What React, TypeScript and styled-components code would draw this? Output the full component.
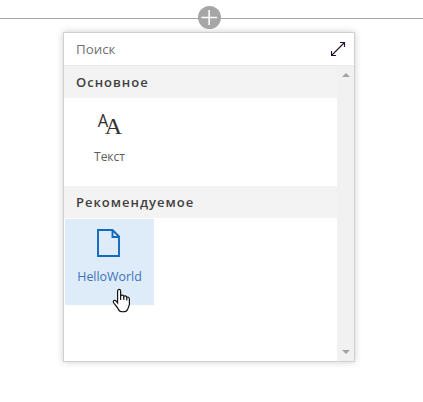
import React from 'react';
import styled, { createGlobalStyle } from 'styled-components';

const Global = createGlobalStyle`
  * { box-sizing: border-box; }
  body { margin: 0; background: #fff; overflow: hidden; font-family: "Open Sans", "Noto Sans", sans-serif; }
`;

const Page = styled.main`
  width: 423px;
  height: 402px;
  position: relative;
  overflow: hidden;
`;

const Divider = styled.div`
  height: 1px;
  margin-top: 18px;
  background: #a6a6a6;
`;

const AddButton = styled.button`
  position: absolute;
  left: 198px;
  top: 6px;
  width: 23px;
  height: 23px;
  padding: 0;
  border: 0;
  border-radius: 50%;
  background: #a6a6a6;
  svg { display: block; }
`;

const Panel = styled.section`
  display: flex;
  flex-direction: column;
  width: 292px;
  height: 330px;
  margin: 13px 0 0 63px;
  border: 1px solid #d0d0d0;
  background: #fff;
  box-shadow: 0 0 7px rgba(0, 0, 0, 0.2);
`;

const SearchRow = styled.div`
  display: flex;
  align-items: center;
  justify-content: space-between;
  height: 33px;
  padding: 0 8px 0 12px;
  border-bottom: 1px solid #eaeaea;
  svg { display: block; }
`;

const Placeholder = styled.span`
  font: 13.3px/32px "Open Sans", sans-serif;
  color: #707070;
`;

const Content = styled.div`
  display: flex;
  flex: 1;
  min-height: 0;
`;

const Groups = styled.div`
  flex: 1;
`;

const GroupTitle = styled.h2`
  height: 32px;
  margin: 0;
  padding-left: 12px;
  background: #f3f3f3;
  color: #404040;
  font: 600 13px/33px "Open Sans", sans-serif;
  letter-spacing: 1px;
`;

const Tiles = styled.div`
  height: 88px;
  padding: 1px;
`;

const Tile = styled.div<{ $active?: boolean }>`
  display: flex;
  flex-direction: column;
  align-items: center;
  width: 89px;
  height: 86px;
  padding-top: 8px;
  background: ${(p) => (p.$active ? '#deebf8' : 'transparent')};
  color: ${(p) => (p.$active ? '#3b72b9' : '#5c5c5c')};
  svg { display: block; }
`;

const TileLabel = styled.span<{ $size: number }>`
  margin-top: 9px;
  font: ${(p) => p.$size}px/18px "Open Sans", sans-serif;
`;

const ScrollBar = styled.div`
  display: flex;
  flex-direction: column;
  align-items: center;
  justify-content: space-between;
  width: 17px;
  padding: 7px 0;
  background: #f1f1f1;
`;

const Cursor = styled.svg`
  position: absolute;
  left: 112px;
  top: 288px;
`;

const ScrollArrow = ({ down }: { down?: boolean }) => (
  <svg width="8" height="4" viewBox="0 0 8 4" fill="#a3a3a3">
    <path d={down ? 'M0 0H8L4 4Z' : 'M0 4H8L4 0Z'} />
  </svg>
);

export default function App() {
  return (
    <Page>
      <Global />
      <Divider />
      <AddButton aria-label="add">
        <svg width="23" height="23" viewBox="0 0 23 23" stroke="#fff" fill="none">
          <path d="M11.2 4V19M3.5 11.5H19" strokeWidth="1.6" />
        </svg>
      </AddButton>
      <Panel>
        <SearchRow>
          <Placeholder>Поиск</Placeholder>
          <svg width="16" height="16" viewBox="0 0 16 16" fill="none" stroke="#25102e">
            <path d="M1.5 14.5L14.5 1.5M10 1.5H14.5V6M1.5 10V14.5H6" strokeWidth="1.1" />
          </svg>
        </SearchRow>
        <Content>
          <Groups>
            <GroupTitle>Основное</GroupTitle>
            <Tiles>
              <Tile>
                <svg width="33" height="32" viewBox="0 0 33 32" fill="#333">
                  <text x="4.8" y="19.5" fontFamily="Open Sans" fontSize="19" textLength="10.5" lengthAdjust="spacingAndGlyphs">A</text>
                  <text x="11.7" y="27" fontFamily="Liberation Serif" fontSize="24">A</text>
                </svg>
                <TileLabel $size={12}>Текст</TileLabel>
              </Tile>
            </Tiles>
            <GroupTitle>Рекомендуемое</GroupTitle>
            <Tiles>
              <Tile $active>
                <svg width="33" height="32" viewBox="0 0 33 32" fill="none" stroke="#1269bd" strokeWidth="1.9">
                  <path d="M5 3H19.5L26 9.5V29H5Z M19.5 3V10H26" />
                </svg>
                <TileLabel $size={12.4}>HelloWorld</TileLabel>
              </Tile>
            </Tiles>
          </Groups>
          <ScrollBar>
            <ScrollArrow />
            <ScrollArrow down />
          </ScrollBar>
        </Content>
      </Panel>
      <Cursor width="20" height="26" viewBox="0 0 20 26" fill="#fff" stroke="#151515" strokeWidth="1.2">
        <path d="M5.6 15V3C5.6 .9 8.6 .9 8.6 3V8C9 6.5 11.5 6.8 11.8 8.5C12.3 7.4 14.5 7.8 14.8 9.5C15.5 8.6 17.4 9.2 17.4 11V16C17.4 18 16 20 15.5 21.5C14.5 24.5 7.5 24.5 6.5 21.5C5.5 19 3 17 1.5 14.5C.5 12.5 3 11.5 4.3 13.2Z" />
        <path d="M8.6 8V12M11.8 8.5V12M14.8 9.5V12.5" />
      </Cursor>
    </Page>
  );
}
